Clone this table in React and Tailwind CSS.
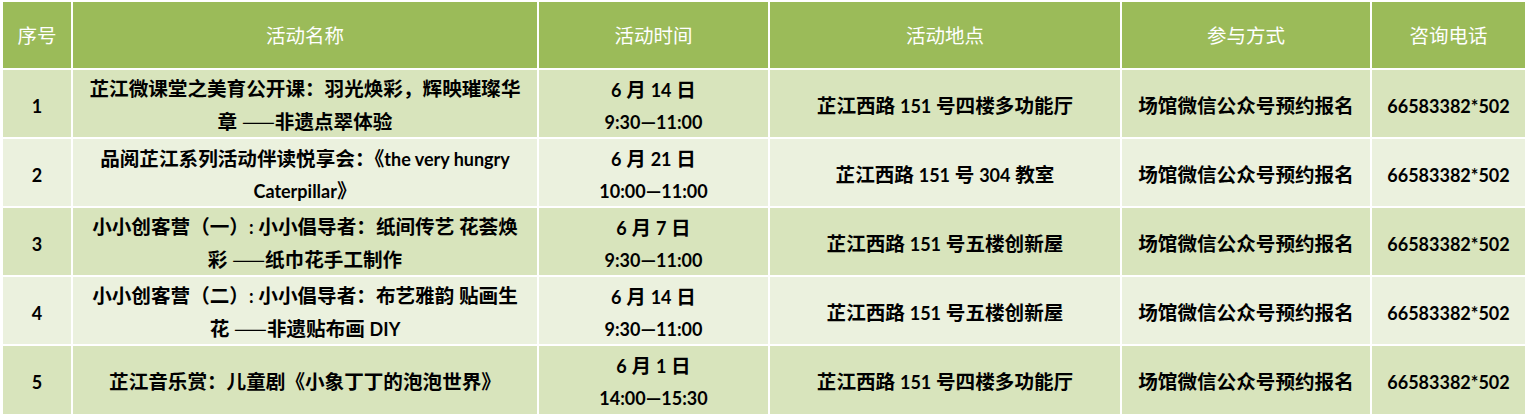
const rows = [
  {
    no: "1",
    name: ["芷江微课堂之美育公开课：羽光焕彩，辉映璀璨华", "章 ——非遗点翠体验"],
    date: "6 月 14 日",
    time: "9:30—11:00",
    place: "芷江西路 151 号四楼多功能厅",
  },
  {
    no: "2",
    name: ["品阅芷江系列活动伴读悦享会：《the very hungry", "Caterpillar》"],
    date: "6 月 21 日",
    time: "10:00—11:00",
    place: "芷江西路 151 号 304 教室",
  },
  {
    no: "3",
    name: ["小小创客营（一）: 小小倡导者：纸间传艺 花荟焕", "彩 ——纸巾花手工制作"],
    date: "6 月 7 日",
    time: "9:30—11:00",
    place: "芷江西路 151 号五楼创新屋",
  },
  {
    no: "4",
    name: ["小小创客营（二）: 小小倡导者：布艺雅韵 贴画生", "花 ——非遗贴布画 DIY"],
    date: "6 月 14 日",
    time: "9:30—11:00",
    place: "芷江西路 151 号五楼创新屋",
  },
  {
    no: "5",
    name: ["芷江音乐赏：儿童剧《小象丁丁的泡泡世界》"],
    date: "6 月 1 日",
    time: "14:00—15:30",
    place: "芷江西路 151 号四楼多功能厅",
  },
];

const headers = ["序号", "活动名称", "活动时间", "活动地点", "参与方式", "咨询电话"];

// latin runs (digits, words) get a narrower size, like Calibri next to SimSun
function Mixed({ text }) {
  const parts = text.split(/(——|[A-Za-z0-9:*.]+(?: [A-Za-z0-9:*.]+)*)/);
  return (
    <div>
      {parts.map((p, i) => {
        if (i % 2 === 0) return <span key={i}>{p}</span>;
        if (p === "——")
          return (
            <span key={i} className="font-['Noto_Sans_CJK_SC'] font-normal">
              {p}
            </span>
          );
        return (
          <span key={i} className="text-[18px]">
            {p}
          </span>
        );
      })}
    </div>
  );
}

function Cell({ children, bg }) {
  return (
    <div
      className={`${bg} flex flex-col items-center justify-center pt-[4px] text-center leading-[32px] font-bold text-black`}
    >
      {children}
    </div>
  );
}

export default function App() {
  return (
    <div
      className="bg-white w-[1525px] h-[420px] pt-[2px] pl-[3px]"
      style={{ fontFamily: '"Lato", "Noto Sans CJK SC", sans-serif' }}
    >
      <div className="grid grid-cols-[68px_464px_229px_350px_248px_153px] grid-rows-[66px_67px_67px_67px_67px_68px] gap-[2px] text-[19.6px]">
        {headers.map((h) => (
          <div
            key={h}
            className="bg-[#9bbb59] flex items-center justify-center pt-[2px] text-white text-[19.5px]"
          >
            {h}
          </div>
        ))}
        {rows.map((r, idx) => {
          const bg = idx % 2 === 0 ? "bg-[#d8e4bc]" : "bg-[#ebf1de]";
          return [
            <Cell key={r.no + "a"} bg={bg}>
              <Mixed text={r.no} />
            </Cell>,
            <Cell key={r.no + "b"} bg={bg}>
              {r.name.map((l) => (
                <Mixed key={l} text={l} />
              ))}
            </Cell>,
            <Cell key={r.no + "c"} bg={bg}>
              <Mixed text={r.date} />
              <Mixed text={r.time} />
            </Cell>,
            <Cell key={r.no + "d"} bg={bg}>
              <Mixed text={r.place} />
            </Cell>,
            <Cell key={r.no + "e"} bg={bg}>
              场馆微信公众号预约报名
            </Cell>,
            <Cell key={r.no + "f"} bg={bg}>
              <Mixed text="66583382*502" />
            </Cell>,
          ];
        })}
      </div>
    </div>
  );
}
